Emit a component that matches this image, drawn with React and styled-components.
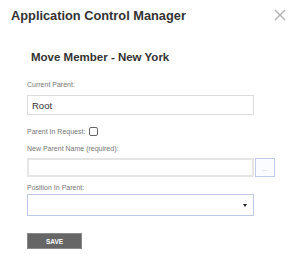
import React from 'react'
import styled, { createGlobalStyle } from 'styled-components'

const GlobalStyle = createGlobalStyle`
	html, body {
		margin: 0;
		padding: 0;
		background: #fff;
	}
	body {
		font-family: "Liberation Sans", Arial, sans-serif;
		color: #333;
	}
`

const Dialog = styled.div`
	width: 297px;
	height: 260px;
	box-sizing: border-box;
	background: #fff;
`

const Header = styled.div`
	display: flex;
	justify-content: space-between;
	align-items: flex-start;
	padding: 8px 11px 0 11px;
`

const Title = styled.h1`
	margin: 0;
	font-size: 12.8px;
	line-height: 15px;
	font-weight: bold;
	color: #333;
`

const CloseButton = styled.button`
	display: flex;
	margin: 1px 0 0 0;
	padding: 0;
	border: 0;
	background: none;
	cursor: pointer;
`

const Body = styled.div`
	padding: 0 0 0 27px;
`

const SubTitle = styled.h2`
	margin: 27px 0 0 4px;
	font-size: 11.5px;
	line-height: 14px;
	font-weight: bold;
	color: #333;
`

const Form = styled.form`
	display: flex;
	flex-direction: column;
	width: 248px;
	margin-top: 17px;
`

const Label = styled.label`
	display: block;
	font-size: 7px;
	line-height: 8px;
	color: #777;
	margin-top: ${props => props.$top || 0}px;
	margin-bottom: ${props => props.$bottom || 5}px;
`

const TextInput = styled.input`
	box-sizing: border-box;
	width: 227px;
	height: ${props => props.$height || 20}px;
	margin: 0;
	padding: 0 4px;
	border: ${props => props.$thick ? '2px solid #e6e6e6' : '1px solid #dcdcdc'};
	border-radius: 0;
	font-family: inherit;
	font-size: 9.5px;
	color: #333;
	outline: none;
`

const CheckRow = styled.div`
	display: flex;
	align-items: center;
	gap: 4px;
	margin-top: 12px;
	font-size: 7px;
	line-height: 9px;
	color: #777;
`

const Checkbox = styled.input`
	appearance: none;
	box-sizing: border-box;
	width: 9px;
	height: 9px;
	margin: 0;
	border: 1px solid #666;
	border-radius: 2px;
	background: #fff;
`

const InputRow = styled.div`
	display: flex;
	align-items: center;
	gap: 1px;
`

const BrowseButton = styled.button`
	box-sizing: border-box;
	width: 20px;
	height: 19px;
	margin: 0;
	padding: 0 0 4px 0;
	display: flex;
	align-items: flex-end;
	justify-content: center;
	border: 1px solid #c3cbe6;
	background: #fbfcff;
	font-family: inherit;
	font-size: 5px;
	line-height: 5px;
	letter-spacing: 0.5px;
	color: #777;
`

const SelectWrap = styled.div`
	display: grid;
	width: 227px;
	height: 22px;
	box-sizing: border-box;
	border: 1px solid #c0c9e4;
	background: #fff;
`

const Select = styled.select`
	grid-area: 1 / 1;
	appearance: none;
	border: 0;
	margin: 0;
	padding: 0 4px;
	background: transparent;
	font-family: inherit;
	font-size: 9.5px;
	outline: none;
`

const Caret = styled.svg`
	grid-area: 1 / 1;
	justify-self: end;
	align-self: center;
	margin-right: 6px;
	pointer-events: none;
`

const SaveButton = styled.button`
	box-sizing: border-box;
	width: 55px;
	height: 16px;
	margin-top: 17px;
	padding: 0;
	border: 1px solid #8a8a8a;
	background: #666;
	color: #fff;
	font-family: inherit;
	font-weight: bold;
	font-size: 6.5px;
	letter-spacing: -0.1px;
	cursor: pointer;
`

const App = () => (
	<Dialog>
		<GlobalStyle />
		<Header>
			<Title>Application Control Manager</Title>
			<CloseButton aria-label="Close">
				<svg width="12" height="12" viewBox="0 0 12 12">
					<path d="M1 1 L11 11 M11 1 L1 11" stroke="#b0b0b0" strokeWidth="1.4" fill="none" />
				</svg>
			</CloseButton>
		</Header>
		<Body>
			<SubTitle>Move Member - New York</SubTitle>
			<Form onSubmit={e => e.preventDefault()}>
				<Label $bottom={6}>Current Parent:</Label>
				<TextInput defaultValue="Root" />
				<CheckRow>
					<span>Parent In Request:</span>
					<Checkbox type="checkbox" />
				</CheckRow>
				<Label $top={9} $bottom={5}>New Parent Name (required):</Label>
				<InputRow>
					<TextInput $thick $height={19} />
					<BrowseButton type="button">...</BrowseButton>
				</InputRow>
				<Label $top={7} $bottom={2}>Position In Parent:</Label>
				<SelectWrap>
					<Select defaultValue="">
						<option value=""></option>
					</Select>
					<Caret width="4" height="3" viewBox="0 0 4 3">
						<path d="M0 0 L4 0 L2 3 Z" fill="#222" />
					</Caret>
				</SelectWrap>
				<SaveButton type="submit">SAVE</SaveButton>
			</Form>
		</Body>
	</Dialog>
)

export default App
